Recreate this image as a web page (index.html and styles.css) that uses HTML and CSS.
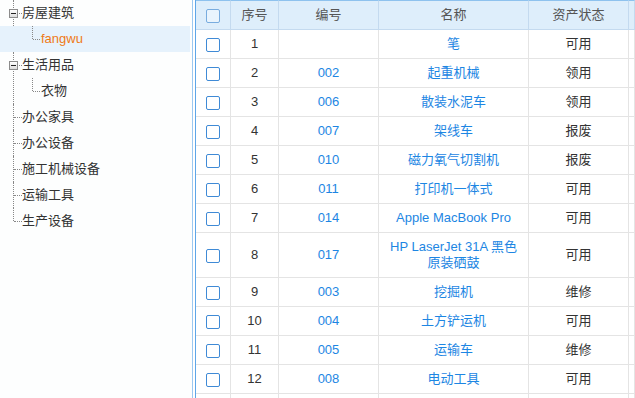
FILE: index.html
```html
<!DOCTYPE html>
<html lang="zh">
<head>
    <meta charset="UTF-8">
    <title>资产列表</title>
    <link rel="stylesheet" href="styles.css">
</head>
<body>
    <div class="layout">
        <!-- 分类树 -->
        <div class="tree-panel">
            <ul class="tree">
                <li class="node">
                    <div class="row"><span class="toggle"></span><span class="label">房屋建筑</span></div>
                    <ul class="children">
                        <li class="leaf"><div class="row selected"><span class="label">fangwu</span></div></li>
                    </ul>
                </li>
                <li class="node">
                    <div class="row"><span class="toggle"></span><span class="label">生活用品</span></div>
                    <ul class="children">
                        <li class="leaf"><div class="row"><span class="label">衣物</span></div></li>
                    </ul>
                </li>
                <li class="node"><div class="row"><span class="label">办公家具</span></div></li>
                <li class="node"><div class="row"><span class="label">办公设备</span></div></li>
                <li class="node"><div class="row"><span class="label">施工机械设备</span></div></li>
                <li class="node"><div class="row"><span class="label">运输工具</span></div></li>
                <li class="node last"><div class="row"><span class="label">生产设备</span></div></li>
            </ul>
        </div>

        <!-- 资产表格 -->
        <div class="grid-panel">
            <table class="grid">
                <thead>
                    <tr>
                        <th class="c-check"><span class="checkbox"></span></th>
                        <th class="c-no">序号</th>
                        <th class="c-code">编号</th>
                        <th class="c-name">名称</th>
                        <th class="c-state">资产状态</th>
                        <th class="c-rest"></th>
                    </tr>
                </thead>
                <tbody>
                    <tr><td><span class="checkbox"></span></td><td>1</td><td class="link"></td><td class="link">笔</td><td>可用</td><td></td></tr>
                    <tr><td><span class="checkbox"></span></td><td>2</td><td class="link">002</td><td class="link">起重机械</td><td>领用</td><td></td></tr>
                    <tr><td><span class="checkbox"></span></td><td>3</td><td class="link">006</td><td class="link">散装水泥车</td><td>领用</td><td></td></tr>
                    <tr><td><span class="checkbox"></span></td><td>4</td><td class="link">007</td><td class="link">架线车</td><td>报废</td><td></td></tr>
                    <tr><td><span class="checkbox"></span></td><td>5</td><td class="link">010</td><td class="link">磁力氧气切割机</td><td>报废</td><td></td></tr>
                    <tr><td><span class="checkbox"></span></td><td>6</td><td class="link">011</td><td class="link">打印机一体式</td><td>可用</td><td></td></tr>
                    <tr><td><span class="checkbox"></span></td><td>7</td><td class="link">014</td><td class="link">Apple MacBook Pro</td><td>可用</td><td></td></tr>
                    <tr><td><span class="checkbox"></span></td><td>8</td><td class="link">017</td><td class="link">HP LaserJet 31A 黑色<br>原装硒鼓</td><td>可用</td><td></td></tr>
                    <tr><td><span class="checkbox"></span></td><td>9</td><td class="link">003</td><td class="link">挖掘机</td><td>维修</td><td></td></tr>
                    <tr><td><span class="checkbox"></span></td><td>10</td><td class="link">004</td><td class="link">土方铲运机</td><td>可用</td><td></td></tr>
                    <tr><td><span class="checkbox"></span></td><td>11</td><td class="link">005</td><td class="link">运输车</td><td>维修</td><td></td></tr>
                    <tr><td><span class="checkbox"></span></td><td>12</td><td class="link">008</td><td class="link">电动工具</td><td>可用</td><td></td></tr>
                    <tr><td></td><td></td><td></td><td></td><td></td><td></td></tr>
                </tbody>
            </table>
        </div>
    </div>
</body>
</html>
```

FILE: styles.css
```css
body {
    margin: 0;
    font-family: "Liberation Sans", "Noto Sans CJK SC", sans-serif;
    font-size: 13px;
    color: #333;
    background: #fff;
}

.layout {
    display: flex;
    height: 398px;
    overflow: hidden;
}

/* ---------- tree ---------- */
.tree-panel {
    box-sizing: border-box;
    width: 193px;
    flex: none;
    border-right: 1px solid #9cc8f0;
    background: #fdfefe;
}

.tree,
.tree ul {
    list-style: none;
    margin: 0;
    padding: 0;
}

.tree .node {
    position: relative;
}

/* vertical dotted trunk */
.tree .node::before {
    content: "";
    position: absolute;
    left: 13px;
    top: 0;
    bottom: 0;
    border-left: 1px dotted #888;
}

.tree .node.last::before {
    bottom: 13px;
}

.tree .row {
    position: relative;
    height: 26px;
    line-height: 26px;
    padding-left: 22px;
    margin-right: 2px;
    white-space: nowrap;
}

/* horizontal connector */
.tree .row::before {
    content: "";
    position: absolute;
    left: 14px;
    width: 8px;
    top: 13px;
    border-top: 1px dotted #888;
}

.tree .leaf {
    position: relative;
}

.tree .leaf .row {
    padding-left: 41px;
}

.tree .leaf .row::before {
    left: 33px;
    width: 7px;
}

.tree .leaf .row::after {
    content: "";
    position: absolute;
    left: 32px;
    top: 0;
    height: 13px;
    border-left: 1px dotted #888;
}

.tree .row.selected {
    background: #e6f2fc;
}

.tree .row.selected .label {
    color: #ef7a17;
}

.toggle {
    position: absolute;
    left: 9px;
    top: 9px;
    box-sizing: border-box;
    width: 9px;
    height: 9px;
    border: 1px solid #8c8c8c;
    background: linear-gradient(#ffffff, #dcdcdc);
    z-index: 1;
}

.toggle::after {
    content: "";
    position: absolute;
    left: 1px;
    right: 1px;
    top: 3px;
    border-top: 1px solid #222;
}

/* ---------- grid ---------- */
.grid-panel {
    flex: 1;
    margin-left: 2px;
    border-left: 1px solid #5ea6e8;
    overflow: hidden;
}

.grid {
    border-collapse: separate;
    border-spacing: 0;
    table-layout: fixed;
    width: 100%;
}

.grid th,
.grid td {
    box-sizing: border-box;
    padding: 6px 4px;
    line-height: 16px;
    text-align: center;
    border-right: 1px solid #e4e4e4;
    border-bottom: 1px solid #e4e4e4;
    font-weight: normal;
    overflow: hidden;
}

.grid th {
    height: 30px;
    background: #deeefb;
    color: #555;
    border-top: 1px solid #8ec2ee;
    border-right-color: #c4daef;
    border-bottom-color: #c4daef;
}

.grid td {
    height: 29px;
}

.c-check { width: 35px; }
.c-no { width: 48px; }
.c-code { width: 100px; }
.c-name { width: 150px; }
.c-state { width: 100px; }

.grid .link {
    color: #1d86e3;
}

.checkbox {
    display: inline-block;
    box-sizing: border-box;
    width: 14px;
    height: 14px;
    border: 1px solid #3f8ad6;
    border-radius: 2px;
    background: #fff;
    vertical-align: middle;
}

.grid th .checkbox {
    border-color: #78acdf;
    background: #e9f4fd;
}
```
